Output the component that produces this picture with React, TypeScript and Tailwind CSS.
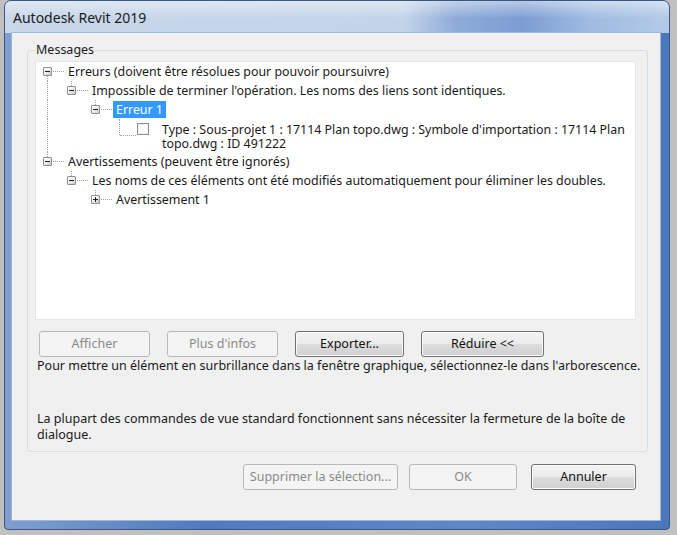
import type { ReactNode } from "react";
import clsx from "clsx";

type Guide = "full" | "top" | "bottom";

type TreeRow = {
  level: number;
  text: ReactNode;
  toggle?: "-" | "+";
  guides: Record<number, Guide>;
  selected?: boolean;
  checkbox?: boolean;
};

const rows: TreeRow[] = [
  { level: 0, text: "Erreurs (doivent être résolues pour pouvoir poursuivre)", toggle: "-", guides: { 0: "bottom" } },
  { level: 1, text: "Impossible de terminer l'opération. Les noms des liens sont identiques.", toggle: "-", guides: { 0: "full", 1: "top" } },
  { level: 2, text: "Erreur 1", toggle: "-", guides: { 0: "full", 2: "top" }, selected: true },
  {
    level: 3,
    text: (
      <>
        <div className="h-[14px]">Type : Sous-projet 1 : 17114 Plan topo.dwg : Symbole d'importation : 17114 Plan</div>
        <div className="h-[14px]">topo.dwg : ID 491222</div>
      </>
    ),
    guides: { 0: "full", 3: "top" },
    checkbox: true,
  },
  { level: 0, text: "Avertissements (peuvent être ignorés)", toggle: "-", guides: { 0: "top" } },
  { level: 1, text: "Les noms de ces éléments ont été modifiés automatiquement pour éliminer les doubles.", toggle: "-", guides: { 1: "top" } },
  { level: 2, text: "Avertissement 1", toggle: "+", guides: { 2: "top" } },
];

function Toggle({ sign }: { sign: "-" | "+" }) {
  return (
    <div className="absolute left-[7px] top-[5px] w-[9px] h-[9px] border border-[#8f8f8f] rounded-[1px] bg-[linear-gradient(135deg,#ffffff_20%,#c9c9c9_100%)]">
      <div className="absolute left-[1px] top-[3px] w-[5px] h-[1px] bg-[#1f1f1f]" />
      {sign === "+" && <div className="absolute left-[3px] top-[1px] w-[1px] h-[5px] bg-[#1f1f1f]" />}
    </div>
  );
}

function Row({ row }: { row: TreeRow }) {
  const tall = !!row.checkbox;
  const cols = Array.from({ length: row.level + 1 }, (_, i) => i);
  return (
    <div className={clsx("flex", tall ? "h-[33px] items-start" : "h-[19px] items-center")}>
      {cols.map((c) => {
        const g = row.guides[c];
        const own = c === row.level;
        return (
          <div key={c} className="relative w-[24px] shrink-0 self-stretch">
            {g && (
              <div
                className={clsx(
                  "absolute left-[11px] w-0 border-l border-dotted border-[#a0a0a0]",
                  g === "full" && "top-0 bottom-0",
                  g === "top" && (tall ? "top-0 h-[16px]" : "top-0 h-[9px]"),
                  g === "bottom" && "top-[9px] bottom-0"
                )}
              />
            )}
            {own && (
              <div
                className={clsx(
                  "absolute left-[12px] w-[16px] h-0 border-t border-dotted border-[#a0a0a0]",
                  tall ? "top-[16px]" : "top-[9px]"
                )}
              />
            )}
            {own && row.toggle && <Toggle sign={row.toggle} />}
          </div>
        );
      })}
      {row.checkbox ? (
        <div className="flex items-start ml-[5px] mt-[4px]">
          <div className="w-[12px] h-[12px] shrink-0 border border-[#8e8f8f] bg-white shadow-[inset_0_0_0_1px_#f1f1f1]" />
          <div className="ml-[13px] leading-[14px] whitespace-nowrap text-[#1a1a1a]">{row.text}</div>
        </div>
      ) : (
        <div
          className={clsx(
            "ml-[5px] px-[3px] h-[17px] leading-[17px] whitespace-nowrap",
            row.selected ? "bg-[#3399ff] text-white" : "text-[#1a1a1a]"
          )}
        >
          {row.text}
        </div>
      )}
    </div>
  );
}

function Btn({ children, className, disabled }: { children: ReactNode; className: string; disabled?: boolean }) {
  return (
    <button
      disabled={disabled}
      className={clsx(
        "h-[26px] shrink-0 rounded-[3px] border text-[12.5px] leading-none",
        disabled
          ? "border-[#b5b9bc] bg-[#f4f4f4] text-[#8a8a8a]"
          : "border-[#707070] text-[#111] shadow-[inset_0_0_0_1px_#fbfbfb] bg-[linear-gradient(180deg,#f3f3f3_0%,#ebebeb_48%,#dddddd_52%,#cfcfcf_100%)]",
        className
      )}
    >
      {children}
    </button>
  );
}

export default function App() {
  return (
    <div className="w-[677px] h-[535px] bg-[#c0c0c0] pl-[4px] overflow-hidden font-['Segoe_UI','Noto_Sans',sans-serif]">
      <div className="w-[666px] h-[530px] flex flex-col border border-[#3b5680] rounded-t-[7px] rounded-b-[4px] bg-[linear-gradient(90deg,#7f9fcf_0%,#4f7bbd_30%,#5f88c6_70%,#4a77bb_100%)]">
        <div className="h-[32px] shrink-0 flex items-center pl-[8px] rounded-t-[6px] text-[14px] text-[#1b1b1b] bg-[linear-gradient(180deg,rgba(255,255,255,0.45)_0%,rgba(255,255,255,0)_55%),linear-gradient(90deg,#c8d7ea_0%,#c3d4e9_60%,#8eabd8_68%,#7c9dd3_78%,#9fbbe2_88%,#b4cae7_100%)]">
          Autodesk Revit 2019
        </div>
        <div className="flex-1 min-w-0 ml-[7px] mr-[9px] mb-[9px] bg-[#f0f0f0] shadow-[0_0_0_1px_#9db6da] flex flex-col">
          <fieldset className="min-w-0 mt-[9px] ml-[15px] mr-[12px] border border-[#d5dfe5] rounded-[3px] pl-[8px] pr-[11px] pt-[3px] pb-[8px] text-[12.5px]">
            <legend className="leading-[16px] text-[#1a1a1a] px-[1px] -ml-[1px]">Messages</legend>
            <div className="h-[259px] bg-white border border-[#e6e6e6] -ml-[1px] overflow-hidden text-[12.4px]">
              {rows.map((r, i) => (
                <Row key={i} row={r} />
              ))}
            </div>
            <div className="flex mt-[11px] ml-[3px] gap-[17px]">
              <Btn disabled className="w-[111px]">Afficher</Btn>
              <Btn disabled className="w-[111px]">Plus d'infos</Btn>
              <Btn className="w-[109px]">Exporter...</Btn>
              <Btn className="w-[123px]">Réduire &lt;&lt;</Btn>
            </div>
            <p className="mt-[1px] ml-[1px] leading-[16px] text-[#1a1a1a] whitespace-nowrap">
              Pour mettre un élément en surbrillance dans la fenêtre graphique, sélectionnez-le dans l'arborescence.
            </p>
            <p className="mt-[37px] ml-[1px] leading-[16px] text-[#1a1a1a] whitespace-nowrap">
              La plupart des commandes de vue standard fonctionnent sans nécessiter la fermeture de la boîte de
              <br />
              dialogue.
            </p>
          </fieldset>
          <div className="flex justify-end mt-[12px] pr-[24px]">
            <Btn disabled className="w-[155px]">Supprimer la sélection...</Btn>
            <Btn disabled className="w-[108px] ml-[11px]">OK</Btn>
            <Btn className="w-[105px] ml-[14px] border-[#5e5e5e]">Annuler</Btn>
          </div>
        </div>
      </div>
    </div>
  );
}
